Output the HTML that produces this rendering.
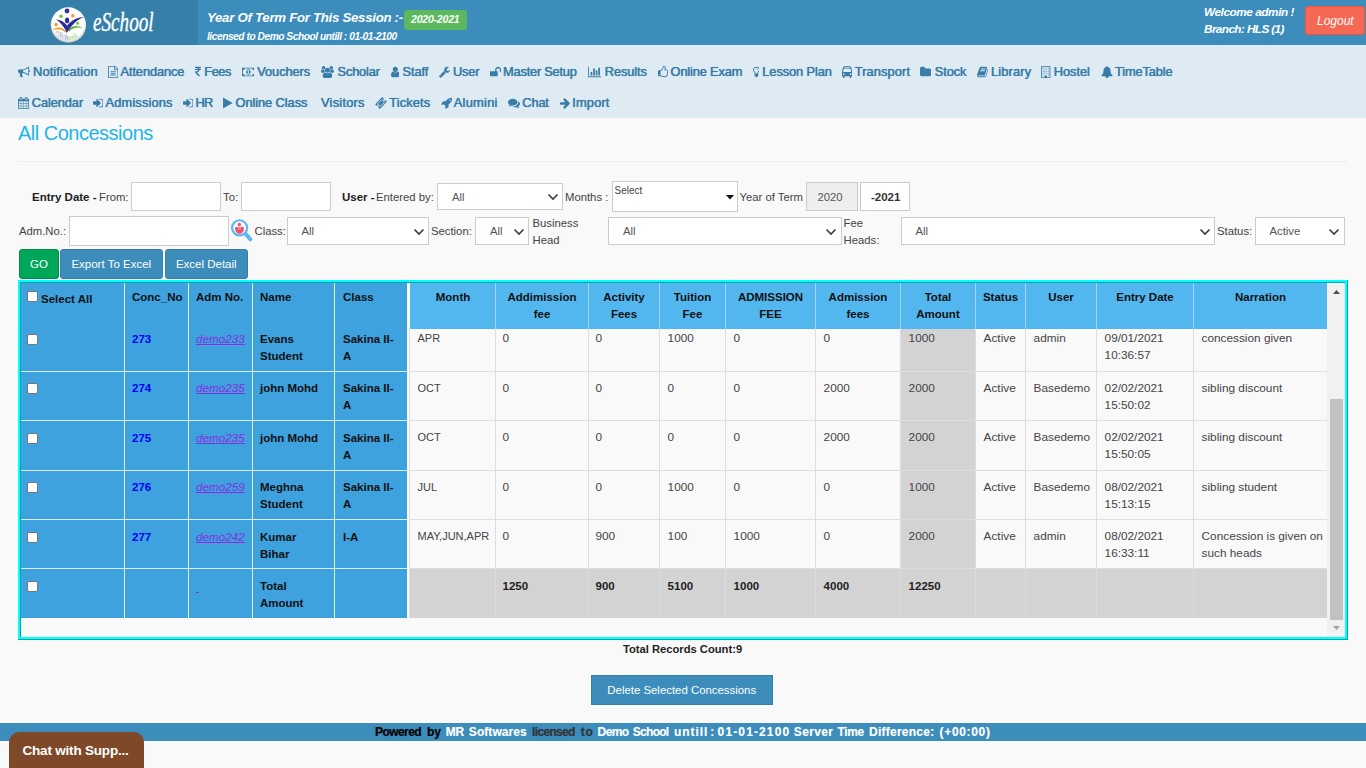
<!DOCTYPE html>
<html lang="en"><head><meta charset="utf-8"><title>All Concessions</title>
<style>
html,body{margin:0;padding:0}
body{width:1366px;height:768px;overflow:hidden;background:#f9f9f9;font-family:"Liberation Sans",sans-serif;font-size:12px;color:#444;position:relative}
.abs{position:absolute}
.t{position:absolute;white-space:nowrap;line-height:17px}
.b{font-weight:bold}
.i{font-style:italic}
.w{color:#fff}
.mi{position:absolute;white-space:nowrap;font-size:12.9px;line-height:15px;color:#3a7ca8;text-shadow:0 0 .7px #3a7ca8;-webkit-text-stroke:.2px #3a7ca8}
.inp{position:absolute;box-sizing:border-box;background:#fff;border:1px solid #ccc}
.lbl{position:absolute;white-space:nowrap;font-size:11.3px;line-height:17px;color:#444}
.btn{position:absolute;box-sizing:border-box;border-radius:3px;color:#fff;font-size:11.5px;text-align:center;line-height:29px;white-space:nowrap}
.cb{position:absolute;box-sizing:border-box;width:11px;height:11px;background:#fff;border:1px solid #767676;border-radius:2px}
.lc{position:absolute;white-space:nowrap;font-weight:bold;font-size:11.5px;line-height:17px;color:#111}
.rc{position:absolute;white-space:nowrap;font-size:11.8px;line-height:17px;color:#444}
.rh{position:absolute;font-weight:bold;font-size:11.5px;line-height:17px;color:#111;text-align:center;white-space:nowrap}
.vl{position:absolute;width:1px}
.hl{position:absolute;height:1px}
</style></head><body>

<div class="abs" style="left:0;top:0;width:198px;height:45px;background:#367fa9"></div>
<div class="abs" style="left:198px;top:0;width:1168px;height:45px;background:#3c8dbc"></div>
<svg class="abs" style="left:50px;top:6px" width="38" height="39" viewBox="0 0 38 39">
<defs><radialGradient id="lg" cx="50%" cy="45%" r="52%"><stop offset="0" stop-color="#ffffff"/><stop offset="0.86" stop-color="#fdfdfc"/><stop offset="1" stop-color="#d4d6d2"/></radialGradient>
</defs>
<ellipse cx="18.5" cy="20.3" rx="16.6" ry="17" fill="#2c5f80" opacity=".55"/>
<circle cx="18.4" cy="19" r="17.7" fill="url(#lg)"/>
<path d="M2.6 23.9 C7 20.6 12.5 20.4 16 25.6 L15.2 26.6 C12 22.8 7.5 22.6 2.6 23.9Z" fill="#f39a2b"/>
<path d="M18.2 24.4 C21.5 19.4 27.5 18.8 32.6 22.4 C27.6 20.8 22.8 21.4 19.2 25.8Z" fill="#5cb531"/>
<path d="M6.2 13.5 C11 14 15 16.6 17.1 19.7 C21 14.6 27 11.4 34 11.1 C27.6 13.2 22.2 18.4 16.9 27 C14.6 21.6 11 16.8 6.2 13.5Z" fill="#2a2d96"/>
<ellipse cx="17.1" cy="14.4" rx="2.1" ry="2.9" fill="#2a2d96"/>
<circle cx="17" cy="5" r="2.4" fill="#35349a"/>
<circle cx="11" cy="10.2" r="1.8" fill="#79c143"/>
<circle cx="22.8" cy="9.8" r="1.8" fill="#f39a2b"/>
<circle cx="6.1" cy="18.6" r="1.8" fill="#f39a2b"/>
<circle cx="27.6" cy="17.3" r="1.5" fill="#79c143"/>
<g font-family="Liberation Serif, serif" font-size="7.4" font-weight="bold" opacity=".62"><text x="5.16" y="26.04" fill="#f0a040" transform="rotate(55.7 5.16 26.04)">e</text><text x="7.23" y="29.01" fill="#7480cc" transform="rotate(40.3 7.23 29.01)">S</text><text x="10.66" y="31.85" fill="#7480cc" transform="rotate(24.8 10.66 31.85)">c</text><text x="13.97" y="33.33" fill="#7480cc" transform="rotate(9.3 13.97 33.33)">h</text><text x="18.37" y="34.00" fill="#8cc860" transform="rotate(-6.9 18.37 34.00)">o</text><text x="22.37" y="33.46" fill="#8cc860" transform="rotate(-22.4 22.37 33.46)">o</text><text x="26.08" y="31.88" fill="#8cc860" transform="rotate(-34.7 26.08 31.88)">l</text></g>
</svg>
<div class="t i w" style="left:92.5px;top:7px;font-family:'Liberation Serif',serif;font-size:27px;line-height:30px;transform:scaleX(.71);transform-origin:0 0;-webkit-text-stroke:.35px #fff">eSchool</div>
<div class="t b i w" style="left:207px;top:9px;font-size:13.2px;line-height:17px;letter-spacing:-0.26px">Year Of Term For This Session :-</div>
<div class="abs" style="left:404px;top:10px;width:63px;height:20px;background:#5cb85c;border-radius:3px"></div>
<div class="t b i w" style="left:411px;top:12px;font-size:10.5px;line-height:15px;letter-spacing:-0.2px">2020-2021</div>
<div class="t b i w" style="left:207px;top:28.5px;font-size:10.2px;line-height:15px;letter-spacing:-0.46px">licensed to Demo School untill : 01-01-2100</div>
<div class="t b i w" style="left:1204px;top:3.5px;font-size:11.8px;line-height:17px;letter-spacing:-0.45px">Welcome admin !</div>
<div class="t b i w" style="left:1204px;top:20.5px;font-size:11.8px;line-height:17px;letter-spacing:-0.62px">Branch: HLS (1)</div>
<div class="abs" style="left:1305px;top:6px;width:60px;height:29px;background:#f56954;border-radius:3px;box-sizing:border-box;border:1px solid #f4543c"></div>
<div class="t i w" style="left:1317px;top:12px;font-size:12px;line-height:18px">Logout</div>
<div class="abs" style="left:0;top:45px;width:1366px;height:73px;background:#dfebf3"></div>
<svg class="abs" style="left:18px;top:66.0px" width="12.00" height="12" viewBox="0 0 1792 1792"><path fill="#3a7ca8" transform="translate(0,1536) scale(1,-1)" d="M1664 896q53 0 90.5 -37.5t37.5 -90.5t-37.5 -90.5t-90.5 -37.5v-384q0 -52 -38 -90t-90 -38q-417 347 -812 380q-58 -19 -91 -66t-31 -100.5t40 -92.5q-20 -33 -23 -65.5t6 -58t33.5 -55t48 -50t61.5 -50.5q-29 -58 -111.5 -83t-168.5 -11.5t-132 55.5q-7 23 -29.5 87.5 t-32 94.5t-23 89t-15 101t3.5 98.5t22 110.5h-122q-66 0 -113 47t-47 113v192q0 66 47 113t113 47h480q435 0 896 384q52 0 90 -38t38 -90v-384zM1536 292v954q-394 -302 -768 -343v-270q377 -42 768 -341z"/></svg>
<div class="mi" style="left:33.05px;top:63.9px;letter-spacing:0.08px">Notification</div>
<svg class="abs" style="left:107.5px;top:66.0px" width="10.29" height="12" viewBox="0 0 1536 1792"><path fill="#3a7ca8" transform="translate(0,1536) scale(1,-1)" d="M1468 1156q28 -28 48 -76t20 -88v-1152q0 -40 -28 -68t-68 -28h-1344q-40 0 -68 28t-28 68v1600q0 40 28 68t68 28h896q40 0 88 -20t76 -48zM1024 1400v-376h376q-10 29 -22 41l-313 313q-12 12 -41 22zM1408 -128v1024h-416q-40 0 -68 28t-28 68v416h-768v-1536h1280z M384 736q0 14 9 23t23 9h704q14 0 23 -9t9 -23v-64q0 -14 -9 -23t-23 -9h-704q-14 0 -23 9t-9 23v64zM1120 512q14 0 23 -9t9 -23v-64q0 -14 -9 -23t-23 -9h-704q-14 0 -23 9t-9 23v64q0 14 9 23t23 9h704zM1120 256q14 0 23 -9t9 -23v-64q0 -14 -9 -23t-23 -9h-704 q-14 0 -23 9t-9 23v64q0 14 9 23t23 9h704z"/></svg>
<div class="mi" style="left:120.55px;top:63.9px;letter-spacing:-0.15px">Attendance</div>
<svg class="abs" style="left:195px;top:66.0px" width="6.01" height="12" viewBox="0 0 898 1792"><path fill="#3a7ca8" transform="translate(0,1536) scale(1,-1)" d="M898 1066v-102q0 -14 -9 -23t-23 -9h-168q-23 -144 -129 -234t-276 -110q167 -178 459 -536q14 -16 4 -34q-8 -18 -29 -18h-195q-16 0 -25 12q-306 367 -498 571q-9 9 -9 22v127q0 13 9.5 22.5t22.5 9.5h112q132 0 212.5 43t102.5 125h-427q-14 0 -23 9t-9 23v102 q0 14 9 23t23 9h413q-57 113 -268 113h-145q-13 0 -22.5 9.5t-9.5 22.5v133q0 14 9 23t23 9h832q14 0 23 -9t9 -23v-102q0 -14 -9 -23t-23 -9h-233q47 -61 64 -144h171q14 0 23 -9t9 -23z"/></svg>
<div class="mi" style="left:204.3px;top:63.9px;letter-spacing:-0.51px">Fees</div>
<svg class="abs" style="left:241.5px;top:66.0px" width="12.86" height="12" viewBox="0 0 1920 1792"><path fill="#3a7ca8" transform="translate(0,1536) scale(1,-1)" d="M768 384h384v96h-128v448h-114l-148 -137l77 -80q42 37 55 57h2v-288h-128v-96zM1280 640q0 -70 -21 -142t-59.5 -134t-101.5 -101t-138 -39t-138 39t-101.5 101t-59.5 134t-21 142t21 142t59.5 134t101.5 101t138 39t138 -39t101.5 -101t59.5 -134t21 -142zM1792 384 v512q-106 0 -181 75t-75 181h-1152q0 -106 -75 -181t-181 -75v-512q106 0 181 -75t75 -181h1152q0 106 75 181t181 75zM1920 1216v-1152q0 -26 -19 -45t-45 -19h-1792q-26 0 -45 19t-19 45v1152q0 26 19 45t45 19h1792q26 0 45 -19t19 -45z"/></svg>
<div class="mi" style="left:257.3px;top:63.9px;letter-spacing:-0.12px">Vouchers</div>
<svg class="abs" style="left:320.75px;top:66.0px" width="12.86" height="12" viewBox="0 0 1920 1792"><path fill="#3a7ca8" transform="translate(0,1536) scale(1,-1)" d="M593 640q-162 -5 -265 -128h-134q-82 0 -138 40.5t-56 118.5q0 353 124 353q6 0 43.5 -21t97.5 -42.5t119 -21.5q67 0 133 23q-5 -37 -5 -66q0 -139 81 -256zM1664 3q0 -120 -73 -189.5t-194 -69.5h-874q-121 0 -194 69.5t-73 189.5q0 53 3.5 103.5t14 109t26.5 108.5 t43 97.5t62 81t85.5 53.5t111.5 20q10 0 43 -21.5t73 -48t107 -48t135 -21.5t135 21.5t107 48t73 48t43 21.5q61 0 111.5 -20t85.5 -53.5t62 -81t43 -97.5t26.5 -108.5t14 -109t3.5 -103.5zM640 1280q0 -106 -75 -181t-181 -75t-181 75t-75 181t75 181t181 75t181 -75 t75 -181zM1344 896q0 -159 -112.5 -271.5t-271.5 -112.5t-271.5 112.5t-112.5 271.5t112.5 271.5t271.5 112.5t271.5 -112.5t112.5 -271.5zM1920 671q0 -78 -56 -118.5t-138 -40.5h-134q-103 123 -265 128q81 117 81 256q0 29 -5 66q66 -23 133 -23q59 0 119 21.5t97.5 42.5 t43.5 21q124 0 124 -353zM1792 1280q0 -106 -75 -181t-181 -75t-181 75t-75 181t75 181t181 75t181 -75t75 -181z"/></svg>
<div class="mi" style="left:337.55px;top:63.9px;letter-spacing:-0.22px">Scholar</div>
<svg class="abs" style="left:390.5px;top:66.0px" width="8.57" height="12" viewBox="0 0 1280 1792"><path fill="#3a7ca8" transform="translate(0,1536) scale(1,-1)" d="M1280 137q0 -109 -62.5 -187t-150.5 -78h-854q-88 0 -150.5 78t-62.5 187q0 85 8.5 160.5t31.5 152t58.5 131t94 89t134.5 34.5q131 -128 313 -128t313 128q76 0 134.5 -34.5t94 -89t58.5 -131t31.5 -152t8.5 -160.5zM1024 1024q0 -159 -112.5 -271.5t-271.5 -112.5 t-271.5 112.5t-112.5 271.5t112.5 271.5t271.5 112.5t271.5 -112.5t112.5 -271.5z"/></svg>
<div class="mi" style="left:402.55px;top:63.9px;letter-spacing:-0.10px">Staff</div>
<svg class="abs" style="left:438.75px;top:66.0px" width="11.14" height="12" viewBox="0 0 1664 1792"><path fill="#3a7ca8" transform="translate(0,1536) scale(1,-1)" d="M384 64q0 26 -19 45t-45 19t-45 -19t-19 -45t19 -45t45 -19t45 19t19 45zM1028 484l-682 -682q-37 -37 -90 -37q-52 0 -91 37l-106 108q-38 36 -38 90q0 53 38 91l681 681q39 -98 114.5 -173.5t173.5 -114.5zM1662 919q0 -39 -23 -106q-47 -134 -164.5 -217.5 t-258.5 -83.5q-185 0 -316.5 131.5t-131.5 316.5t131.5 316.5t316.5 131.5q58 0 121.5 -16.5t107.5 -46.5q16 -11 16 -28t-16 -28l-293 -169v-224l193 -107q5 3 79 48.5t135.5 81t70.5 35.5q15 0 23.5 -10t8.5 -25z"/></svg>
<div class="mi" style="left:453.05px;top:63.9px;letter-spacing:-0.27px">User</div>
<svg class="abs" style="left:489.5px;top:66.0px" width="11.14" height="12" viewBox="0 0 1664 1792"><path fill="#3a7ca8" transform="translate(0,1536) scale(1,-1)" d="M1664 960v-256q0 -26 -19 -45t-45 -19h-64q-26 0 -45 19t-19 45v256q0 106 -75 181t-181 75t-181 -75t-75 -181v-192h96q40 0 68 -28t28 -68v-576q0 -40 -28 -68t-68 -28h-960q-40 0 -68 28t-28 68v576q0 40 28 68t68 28h672v192q0 185 131.5 316.5t316.5 131.5 t316.5 -131.5t131.5 -316.5z"/></svg>
<div class="mi" style="left:503.05px;top:63.9px;letter-spacing:-0.25px">Master Setup</div>
<svg class="abs" style="left:587.5px;top:66.0px" width="13.71" height="12" viewBox="0 0 2048 1792"><path fill="#3a7ca8" transform="translate(0,1536) scale(1,-1)" d="M640 640v-512h-256v512h256zM1024 1152v-1024h-256v1024h256zM2048 0v-128h-2048v1536h128v-1408h1920zM1408 896v-768h-256v768h256zM1792 1280v-1152h-256v1152h256z"/></svg>
<div class="mi" style="left:604.8px;top:63.9px;letter-spacing:-0.14px">Results</div>
<svg class="abs" style="left:657.5px;top:66.0px" width="10.29" height="12" viewBox="0 0 1536 1792"><path fill="#3a7ca8" transform="translate(0,1536) scale(1,-1)" d="M256 192q0 26 -19 45t-45 19t-45 -19t-19 -45t19 -45t45 -19t45 19t19 45zM1408 768q0 51 -39 89.5t-89 38.5h-352q0 58 48 159.5t48 160.5q0 98 -32 145t-128 47q-26 -26 -38 -85t-30.5 -125.5t-59.5 -109.5q-22 -23 -77 -91q-4 -5 -23 -30t-31.5 -41t-34.5 -42.5 t-40 -44t-38.5 -35.5t-40 -27t-35.5 -9h-32v-640h32q13 0 31.5 -3t33 -6.5t38 -11t35 -11.5t35.5 -12.5t29 -10.5q211 -73 342 -73h121q192 0 192 167q0 26 -5 56q30 16 47.5 52.5t17.5 73.5t-18 69q53 50 53 119q0 25 -10 55.5t-25 47.5q32 1 53.5 47t21.5 81zM1536 769 q0 -89 -49 -163q9 -33 9 -69q0 -77 -38 -144q3 -21 3 -43q0 -101 -60 -178q1 -139 -85 -219.5t-227 -80.5h-36h-93q-96 0 -189.5 22.5t-216.5 65.5q-116 40 -138 40h-288q-53 0 -90.5 37.5t-37.5 90.5v640q0 53 37.5 90.5t90.5 37.5h274q36 24 137 155q58 75 107 128 q24 25 35.5 85.5t30.5 126.5t62 108q39 37 90 37q84 0 151 -32.5t102 -101.5t35 -186q0 -93 -48 -192h176q104 0 180 -76t76 -179z"/></svg>
<div class="mi" style="left:670.55px;top:63.9px;letter-spacing:-0.19px">Online Exam</div>
<svg class="abs" style="left:752.5px;top:66.0px" width="6.86" height="12" viewBox="0 0 1024 1792"><path fill="#3a7ca8" transform="translate(0,1536) scale(1,-1)" d="M736 960q0 -13 -9.5 -22.5t-22.5 -9.5t-22.5 9.5t-9.5 22.5q0 46 -54 71t-106 25q-13 0 -22.5 9.5t-9.5 22.5t9.5 22.5t22.5 9.5q50 0 99.5 -16t87 -54t37.5 -90zM896 960q0 72 -34.5 134t-90 101.5t-123 62t-136.5 22.5t-136.5 -22.5t-123 -62t-90 -101.5t-34.5 -134 q0 -101 68 -180q10 -11 30.5 -33t30.5 -33q128 -153 141 -298h228q13 145 141 298q10 11 30.5 33t30.5 33q68 79 68 180zM1024 960q0 -155 -103 -268q-45 -49 -74.5 -87t-59.5 -95.5t-34 -107.5q47 -28 47 -82q0 -37 -25 -64q25 -27 25 -64q0 -52 -45 -81q13 -23 13 -47 q0 -46 -31.5 -71t-77.5 -25q-20 -44 -60 -70t-87 -26t-87 26t-60 70q-46 0 -77.5 25t-31.5 71q0 24 13 47q-45 29 -45 81q0 37 25 64q-25 27 -25 64q0 54 47 82q-4 50 -34 107.5t-59.5 95.5t-74.5 87q-103 113 -103 268q0 99 44.5 184.5t117 142t164 89t186.5 32.5 t186.5 -32.5t164 -89t117 -142t44.5 -184.5z"/></svg>
<div class="mi" style="left:762.3px;top:63.9px;letter-spacing:-0.13px">Lesson Plan</div>
<svg class="abs" style="left:841.75px;top:66.0px" width="10.29" height="12" viewBox="0 0 1536 1792"><path fill="#3a7ca8" transform="translate(0,1536) scale(1,-1)" d="M384 320q0 53 -37.5 90.5t-90.5 37.5t-90.5 -37.5t-37.5 -90.5t37.5 -90.5t90.5 -37.5t90.5 37.5t37.5 90.5zM1408 320q0 53 -37.5 90.5t-90.5 37.5t-90.5 -37.5t-37.5 -90.5t37.5 -90.5t90.5 -37.5t90.5 37.5t37.5 90.5zM1362 716l-72 384q-5 23 -22.5 37.5t-40.5 14.5 h-918q-23 0 -40.5 -14.5t-22.5 -37.5l-72 -384q-5 -30 14 -53t49 -23h1062q30 0 49 23t14 53zM1136 1328q0 20 -14 34t-34 14h-640q-20 0 -34 -14t-14 -34t14 -34t34 -14h640q20 0 34 14t14 34zM1536 603v-603h-128v-128q0 -53 -37.5 -90.5t-90.5 -37.5t-90.5 37.5 t-37.5 90.5v128h-768v-128q0 -53 -37.5 -90.5t-90.5 -37.5t-90.5 37.5t-37.5 90.5v128h-128v603q0 112 25 223l103 454q9 78 97.5 137t230 89t312.5 30t312.5 -30t230 -89t97.5 -137l105 -454q23 -102 23 -223z"/></svg>
<div class="mi" style="left:854.8px;top:63.9px;letter-spacing:0.06px">Transport</div>
<svg class="abs" style="left:919.5px;top:66.0px" width="11.14" height="12" viewBox="0 0 1664 1792"><path fill="#3a7ca8" transform="translate(0,1536) scale(1,-1)" d="M1664 928v-704q0 -92 -66 -158t-158 -66h-1216q-92 0 -158 66t-66 158v960q0 92 66 158t158 66h320q92 0 158 -66t66 -158v-32h672q92 0 158 -66t66 -158z"/></svg>
<div class="mi" style="left:934.8px;top:63.9px;letter-spacing:-0.15px">Stock</div>
<svg class="abs" style="left:977px;top:66.0px" width="11.14" height="12" viewBox="0 0 1664 1792"><path fill="#3a7ca8" transform="translate(0,1536) scale(1,-1)" d="M1639 1058q40 -57 18 -129l-275 -906q-19 -64 -76.5 -107.5t-122.5 -43.5h-923q-77 0 -148.5 53.5t-99.5 131.5q-24 67 -2 127q0 4 3 27t4 37q1 8 -3 21.5t-3 19.5q2 11 8 21t16.5 23.5t16.5 23.5q23 38 45 91.5t30 91.5q3 10 0.5 30t-0.5 28q3 11 17 28t17 23 q21 36 42 92t25 90q1 9 -2.5 32t0.5 28q4 13 22 30.5t22 22.5q19 26 42.5 84.5t27.5 96.5q1 8 -3 25.5t-2 26.5q2 8 9 18t18 23t17 21q8 12 16.5 30.5t15 35t16 36t19.5 32t26.5 23.5t36 11.5t47.5 -5.5l-1 -3q38 9 51 9h761q74 0 114 -56t18 -130l-274 -906 q-36 -119 -71.5 -153.5t-128.5 -34.5h-869q-27 0 -38 -15q-11 -16 -1 -43q24 -70 144 -70h923q29 0 56 15.5t35 41.5l300 987q7 22 5 57q38 -15 59 -43zM575 1056q-4 -13 2 -22.5t20 -9.5h608q13 0 25.5 9.5t16.5 22.5l21 64q4 13 -2 22.5t-20 9.5h-608q-13 0 -25.5 -9.5 t-16.5 -22.5zM492 800q-4 -13 2 -22.5t20 -9.5h608q13 0 25.5 9.5t16.5 22.5l21 64q4 13 -2 22.5t-20 9.5h-608q-13 0 -25.5 -9.5t-16.5 -22.5z"/></svg>
<div class="mi" style="left:991.05px;top:63.9px;letter-spacing:0.12px">Library</div>
<svg class="abs" style="left:1041.25px;top:66.0px" width="9.43" height="12" viewBox="0 0 1408 1792"><path fill="#3a7ca8" transform="translate(0,1536) scale(1,-1)" d="M384 224v-64q0 -13 -9.5 -22.5t-22.5 -9.5h-64q-13 0 -22.5 9.5t-9.5 22.5v64q0 13 9.5 22.5t22.5 9.5h64q13 0 22.5 -9.5t9.5 -22.5zM384 480v-64q0 -13 -9.5 -22.5t-22.5 -9.5h-64q-13 0 -22.5 9.5t-9.5 22.5v64q0 13 9.5 22.5t22.5 9.5h64q13 0 22.5 -9.5t9.5 -22.5z M640 480v-64q0 -13 -9.5 -22.5t-22.5 -9.5h-64q-13 0 -22.5 9.5t-9.5 22.5v64q0 13 9.5 22.5t22.5 9.5h64q13 0 22.5 -9.5t9.5 -22.5zM384 736v-64q0 -13 -9.5 -22.5t-22.5 -9.5h-64q-13 0 -22.5 9.5t-9.5 22.5v64q0 13 9.5 22.5t22.5 9.5h64q13 0 22.5 -9.5t9.5 -22.5z M1152 224v-64q0 -13 -9.5 -22.5t-22.5 -9.5h-64q-13 0 -22.5 9.5t-9.5 22.5v64q0 13 9.5 22.5t22.5 9.5h64q13 0 22.5 -9.5t9.5 -22.5zM896 480v-64q0 -13 -9.5 -22.5t-22.5 -9.5h-64q-13 0 -22.5 9.5t-9.5 22.5v64q0 13 9.5 22.5t22.5 9.5h64q13 0 22.5 -9.5t9.5 -22.5z M640 736v-64q0 -13 -9.5 -22.5t-22.5 -9.5h-64q-13 0 -22.5 9.5t-9.5 22.5v64q0 13 9.5 22.5t22.5 9.5h64q13 0 22.5 -9.5t9.5 -22.5zM384 992v-64q0 -13 -9.5 -22.5t-22.5 -9.5h-64q-13 0 -22.5 9.5t-9.5 22.5v64q0 13 9.5 22.5t22.5 9.5h64q13 0 22.5 -9.5t9.5 -22.5z M1152 480v-64q0 -13 -9.5 -22.5t-22.5 -9.5h-64q-13 0 -22.5 9.5t-9.5 22.5v64q0 13 9.5 22.5t22.5 9.5h64q13 0 22.5 -9.5t9.5 -22.5zM896 736v-64q0 -13 -9.5 -22.5t-22.5 -9.5h-64q-13 0 -22.5 9.5t-9.5 22.5v64q0 13 9.5 22.5t22.5 9.5h64q13 0 22.5 -9.5t9.5 -22.5z M640 992v-64q0 -13 -9.5 -22.5t-22.5 -9.5h-64q-13 0 -22.5 9.5t-9.5 22.5v64q0 13 9.5 22.5t22.5 9.5h64q13 0 22.5 -9.5t9.5 -22.5zM384 1248v-64q0 -13 -9.5 -22.5t-22.5 -9.5h-64q-13 0 -22.5 9.5t-9.5 22.5v64q0 13 9.5 22.5t22.5 9.5h64q13 0 22.5 -9.5t9.5 -22.5z M1152 736v-64q0 -13 -9.5 -22.5t-22.5 -9.5h-64q-13 0 -22.5 9.5t-9.5 22.5v64q0 13 9.5 22.5t22.5 9.5h64q13 0 22.5 -9.5t9.5 -22.5zM896 992v-64q0 -13 -9.5 -22.5t-22.5 -9.5h-64q-13 0 -22.5 9.5t-9.5 22.5v64q0 13 9.5 22.5t22.5 9.5h64q13 0 22.5 -9.5t9.5 -22.5z M640 1248v-64q0 -13 -9.5 -22.5t-22.5 -9.5h-64q-13 0 -22.5 9.5t-9.5 22.5v64q0 13 9.5 22.5t22.5 9.5h64q13 0 22.5 -9.5t9.5 -22.5zM1152 992v-64q0 -13 -9.5 -22.5t-22.5 -9.5h-64q-13 0 -22.5 9.5t-9.5 22.5v64q0 13 9.5 22.5t22.5 9.5h64q13 0 22.5 -9.5t9.5 -22.5z M896 1248v-64q0 -13 -9.5 -22.5t-22.5 -9.5h-64q-13 0 -22.5 9.5t-9.5 22.5v64q0 13 9.5 22.5t22.5 9.5h64q13 0 22.5 -9.5t9.5 -22.5zM1152 1248v-64q0 -13 -9.5 -22.5t-22.5 -9.5h-64q-13 0 -22.5 9.5t-9.5 22.5v64q0 13 9.5 22.5t22.5 9.5h64q13 0 22.5 -9.5t9.5 -22.5z M896 -128h384v1536h-1152v-1536h384v224q0 13 9.5 22.5t22.5 9.5h320q13 0 22.5 -9.5t9.5 -22.5v-224zM1408 1472v-1664q0 -26 -19 -45t-45 -19h-1280q-26 0 -45 19t-19 45v1664q0 26 19 45t45 19h1280q26 0 45 -19t19 -45z"/></svg>
<div class="mi" style="left:1053.8px;top:63.9px;letter-spacing:-0.08px">Hostel</div>
<svg class="abs" style="left:1100.75px;top:66.0px" width="12.00" height="12" viewBox="0 0 1792 1792"><path fill="#3a7ca8" transform="translate(0,1536) scale(1,-1)" d="M912 -160q0 16 -16 16q-59 0 -101.5 42.5t-42.5 101.5q0 16 -16 16t-16 -16q0 -73 51.5 -124.5t124.5 -51.5q16 0 16 16zM1728 128q0 -52 -38 -90t-90 -38h-448q0 -106 -75 -181t-181 -75t-181 75t-75 181h-448q-52 0 -90 38t-38 90q50 42 91 88t85 119.5t74.5 158.5 t50 206t19.5 260q0 152 117 282.5t307 158.5q-8 19 -8 39q0 40 28 68t68 28t68 -28t28 -68q0 -20 -8 -39q190 -28 307 -158.5t117 -282.5q0 -139 19.5 -260t50 -206t74.5 -158.5t85 -119.5t91 -88z"/></svg>
<div class="mi" style="left:1115.05px;top:63.9px;letter-spacing:-0.17px">TimeTable</div>
<svg class="abs" style="left:18px;top:97.0px" width="11.14" height="12" viewBox="0 0 1664 1792"><path fill="#3a7ca8" transform="translate(0,1536) scale(1,-1)" d="M128 -128h288v288h-288v-288zM480 -128h320v288h-320v-288zM128 224h288v320h-288v-320zM480 224h320v320h-320v-320zM128 608h288v288h-288v-288zM864 -128h320v288h-320v-288zM480 608h320v288h-320v-288zM1248 -128h288v288h-288v-288zM864 224h320v320h-320v-320z M512 1088v288q0 13 -9.5 22.5t-22.5 9.5h-64q-13 0 -22.5 -9.5t-9.5 -22.5v-288q0 -13 9.5 -22.5t22.5 -9.5h64q13 0 22.5 9.5t9.5 22.5zM1248 224h288v320h-288v-320zM864 608h320v288h-320v-288zM1248 608h288v288h-288v-288zM1280 1088v288q0 13 -9.5 22.5t-22.5 9.5h-64 q-13 0 -22.5 -9.5t-9.5 -22.5v-288q0 -13 9.5 -22.5t22.5 -9.5h64q13 0 22.5 9.5t9.5 22.5zM1664 1152v-1280q0 -52 -38 -90t-90 -38h-1408q-52 0 -90 38t-38 90v1280q0 52 38 90t90 38h128v96q0 66 47 113t113 47h64q66 0 113 -47t47 -113v-96h384v96q0 66 47 113t113 47 h64q66 0 113 -47t47 -113v-96h128q52 0 90 -38t38 -90z"/></svg>
<div class="mi" style="left:31.8px;top:94.9px;letter-spacing:-0.13px">Calendar</div>
<svg class="abs" style="left:93px;top:97.0px" width="10.29" height="12" viewBox="0 0 1536 1792"><path fill="#3a7ca8" transform="translate(0,1536) scale(1,-1)" d="M1184 640q0 -26 -19 -45l-544 -544q-19 -19 -45 -19t-45 19t-19 45v288h-448q-26 0 -45 19t-19 45v384q0 26 19 45t45 19h448v288q0 26 19 45t45 19t45 -19l544 -544q19 -19 19 -45zM1536 992v-704q0 -119 -84.5 -203.5t-203.5 -84.5h-320q-13 0 -22.5 9.5t-9.5 22.5 q0 4 -1 20t-0.5 26.5t3 23.5t10 19.5t20.5 6.5h320q66 0 113 47t47 113v704q0 66 -47 113t-113 47h-288h-11h-13t-11.5 1t-11.5 3t-8 5.5t-7 9t-2 13.5q0 4 -1 20t-0.5 26.5t3 23.5t10 19.5t20.5 6.5h320q119 0 203.5 -84.5t84.5 -203.5z"/></svg>
<div class="mi" style="left:105.55px;top:94.9px;letter-spacing:0.11px">Admissions</div>
<svg class="abs" style="left:182.5px;top:97.0px" width="10.29" height="12" viewBox="0 0 1536 1792"><path fill="#3a7ca8" transform="translate(0,1536) scale(1,-1)" d="M1184 640q0 -26 -19 -45l-544 -544q-19 -19 -45 -19t-45 19t-19 45v288h-448q-26 0 -45 19t-19 45v384q0 26 19 45t45 19h448v288q0 26 19 45t45 19t45 -19l544 -544q19 -19 19 -45zM1536 992v-704q0 -119 -84.5 -203.5t-203.5 -84.5h-320q-13 0 -22.5 9.5t-9.5 22.5 q0 4 -1 20t-0.5 26.5t3 23.5t10 19.5t20.5 6.5h320q66 0 113 47t47 113v704q0 66 -47 113t-113 47h-288h-11h-13t-11.5 1t-11.5 3t-8 5.5t-7 9t-2 13.5q0 4 -1 20t-0.5 26.5t3 23.5t10 19.5t20.5 6.5h320q119 0 203.5 -84.5t84.5 -203.5z"/></svg>
<div class="mi" style="left:195.55px;top:94.9px;letter-spacing:-0.98px">HR</div>
<svg class="abs" style="left:223.25px;top:97.0px" width="9.43" height="12" viewBox="0 0 1408 1792"><path fill="#3a7ca8" transform="translate(0,1536) scale(1,-1)" d="M1384 609l-1328 -738q-23 -13 -39.5 -3t-16.5 36v1472q0 26 16.5 36t39.5 -3l1328 -738q23 -13 23 -31t-23 -31z"/></svg>
<div class="mi" style="left:235.55px;top:94.9px;letter-spacing:-0.11px">Online Class</div>
<div class="mi" style="left:321.05px;top:94.9px;letter-spacing:0.20px">Visitors</div>
<svg class="abs" style="left:375px;top:97.0px" width="12.00" height="12" viewBox="0 0 1792 1792"><path fill="#3a7ca8" transform="translate(0,1536) scale(1,-1)" d="M1024 1084l316 -316l-572 -572l-316 316zM813 105l618 618q19 19 19 45t-19 45l-362 362q-18 18 -45 18t-45 -18l-618 -618q-19 -19 -19 -45t19 -45l362 -362q18 -18 45 -18t45 18zM1702 742l-907 -908q-37 -37 -90.5 -37t-90.5 37l-126 126q56 56 56 136t-56 136 t-136 56t-136 -56l-125 126q-37 37 -37 90.5t37 90.5l907 906q37 37 90.5 37t90.5 -37l125 -125q-56 -56 -56 -136t56 -136t136 -56t136 56l126 -125q37 -37 37 -90.5t-37 -90.5z"/></svg>
<div class="mi" style="left:389.3px;top:94.9px;letter-spacing:0.09px">Tickets</div>
<svg class="abs" style="left:440.75px;top:97.0px" width="11.14" height="12" viewBox="0 0 1664 1792"><path fill="#3a7ca8" transform="translate(0,1536) scale(1,-1)" d="M1440 1088q0 40 -28 68t-68 28t-68 -28t-28 -68t28 -68t68 -28t68 28t28 68zM1664 1376q0 -249 -75.5 -430.5t-253.5 -360.5q-81 -80 -195 -176l-20 -379q-2 -16 -16 -26l-384 -224q-7 -4 -16 -4q-12 0 -23 9l-64 64q-13 14 -8 32l85 276l-281 281l-276 -85q-3 -1 -9 -1 q-14 0 -23 9l-64 64q-17 19 -5 39l224 384q10 14 26 16l379 20q96 114 176 195q188 187 358 258t431 71q14 0 24 -9.5t10 -22.5z"/></svg>
<div class="mi" style="left:453.8px;top:94.9px;letter-spacing:0.23px">Alumini</div>
<svg class="abs" style="left:507.5px;top:97.0px" width="12.00" height="12" viewBox="0 0 1792 1792"><path fill="#3a7ca8" transform="translate(0,1536) scale(1,-1)" d="M1408 768q0 -139 -94 -257t-256.5 -186.5t-353.5 -68.5q-86 0 -176 16q-124 -88 -278 -128q-36 -9 -86 -16h-3q-11 0 -20.5 8t-11.5 21q-1 3 -1 6.5t0.5 6.5t2 6l2.5 5t3.5 5.5t4 5t4.5 5t4 4.5q5 6 23 25t26 29.5t22.5 29t25 38.5t20.5 44q-124 72 -195 177t-71 224 q0 139 94 257t256.5 186.5t353.5 68.5t353.5 -68.5t256.5 -186.5t94 -257zM1792 512q0 -120 -71 -224.5t-195 -176.5q10 -24 20.5 -44t25 -38.5t22.5 -29t26 -29.5t23 -25q1 -1 4 -4.5t4.5 -5t4 -5t3.5 -5.5l2.5 -5t2 -6t0.5 -6.5t-1 -6.5q-3 -14 -13 -22t-22 -7 q-50 7 -86 16q-154 40 -278 128q-90 -16 -176 -16q-271 0 -472 132q58 -4 88 -4q161 0 309 45t264 129q125 92 192 212t67 254q0 77 -23 152q129 -71 204 -178t75 -230z"/></svg>
<div class="mi" style="left:522.3px;top:94.9px;letter-spacing:-0.19px">Chat</div>
<svg class="abs" style="left:559.5px;top:97.0px" width="10.29" height="12" viewBox="0 0 1536 1792"><path fill="#3a7ca8" transform="translate(0,1536) scale(1,-1)" d="M1472 576q0 -54 -37 -91l-651 -651q-39 -37 -91 -37q-51 0 -90 37l-75 75q-38 38 -38 91t38 91l293 293h-704q-52 0 -84.5 37.5t-32.5 90.5v128q0 53 32.5 90.5t84.5 37.5h704l-293 294q-38 36 -38 90t38 90l75 75q38 38 90 38q53 0 91 -38l651 -651q37 -35 37 -90z"/></svg>
<div class="mi" style="left:572.3px;top:94.9px;letter-spacing:0.12px">Import</div>
<div class="t" style="left:18px;top:121px;font-size:20px;line-height:24px;color:#1cb5ea;letter-spacing:-0.5px">All Concessions</div>
<div class="hl" style="left:18px;top:161px;width:1330px;background:#eee"></div>
<div class="lbl b" style="left:32px;top:189px;color:#222;font-size:11.5px">Entry Date -</div>
<div class="lbl" style="left:99px;top:189px">From:</div>
<div class="inp" style="left:131px;top:182px;width:90px;height:29px"></div>
<div class="lbl" style="left:223px;top:189px">To:</div>
<div class="inp" style="left:241px;top:182px;width:90px;height:29px"></div>
<div class="lbl b" style="left:342px;top:189px;color:#222;font-size:11.5px">User -</div>
<div class="lbl" style="left:376px;top:189px">Entered by:</div>
<div class="inp" style="left:437px;top:183px;width:126px;height:27px"></div><div class="lbl" style="left:452px;top:188.5px;color:#555">All</div><svg class="abs" style="left:546.5px;top:193.0px" width="12" height="8" viewBox="0 0 12 8"><path d="M1.5 1.5 L6 6 L10.5 1.5" fill="none" stroke="#3a3a3a" stroke-width="1.6"/></svg>
<div class="lbl" style="left:565px;top:189px">Months :</div>
<div class="inp" style="left:612px;top:181px;width:126px;height:31px"></div>
<div class="lbl" style="left:614.5px;top:184px;font-size:10px;line-height:14px">Select</div>
<svg class="abs" style="left:726px;top:195px" width="8" height="5" viewBox="0 0 8 5"><path d="M0 0H8L4 4.5Z" fill="#111"/></svg>
<div class="lbl" style="left:739.5px;top:189px">Year of Term</div>
<div class="inp" style="left:806px;top:182px;width:52px;height:29px;background:#eee"></div>
<div class="lbl" style="left:817.5px;top:189px;color:#555">2020</div>
<div class="inp" style="left:860px;top:182px;width:50px;height:29px"></div>
<div class="lbl b" style="left:871px;top:189px;color:#333;font-size:11.5px">-2021</div>
<div class="lbl" style="left:19px;top:223px">Adm.No.:</div>
<div class="inp" style="left:69px;top:216px;width:160px;height:30px"></div>
<svg class="abs" style="left:230px;top:218px" width="24" height="25" viewBox="0 0 24 25">
<line x1="15.6" y1="15.8" x2="20.3" y2="21.3" stroke="#5bb7f5" stroke-width="4" stroke-linecap="round"/>
<circle cx="9.6" cy="9.8" r="7.55" fill="#fbfbfb" stroke="#5bb7f5" stroke-width="2.2"/>
<circle cx="9.35" cy="6.4" r="1.75" fill="#f4516c"/>
<path d="M5 9.9 Q5 8.9 6.2 8.9 H12.8 Q14 8.9 14 9.9 C14 17.6 5 17.6 5 9.9Z" fill="#f4516c"/>
<path d="M8.7 8.9 V11.8 M10.2 8.9 V11.8" stroke="#fbe4e8" stroke-width=".5" fill="none"/>
</svg>
<div class="lbl" style="left:254.5px;top:223px">Class:</div>
<div class="inp" style="left:287px;top:217px;width:142px;height:28px"></div><div class="lbl" style="left:301.5px;top:222.5px;color:#555">All</div><svg class="abs" style="left:412.75px;top:227.5px" width="12" height="8" viewBox="0 0 12 8"><path d="M1.5 1.5 L6 6 L10.5 1.5" fill="none" stroke="#3a3a3a" stroke-width="1.6"/></svg>
<div class="lbl" style="left:431px;top:223px">Section:</div>
<div class="inp" style="left:475px;top:217px;width:54px;height:28px"></div><div class="lbl" style="left:490px;top:222.5px;color:#555">All</div><svg class="abs" style="left:513px;top:227.5px" width="12" height="8" viewBox="0 0 12 8"><path d="M1.5 1.5 L6 6 L10.5 1.5" fill="none" stroke="#3a3a3a" stroke-width="1.6"/></svg>
<div class="lbl" style="left:532.5px;top:214.5px;white-space:normal;width:60px">Business Head</div>
<div class="inp" style="left:608px;top:217px;width:234px;height:28px"></div><div class="lbl" style="left:623px;top:222.5px;color:#555">All</div><svg class="abs" style="left:825px;top:227.5px" width="12" height="8" viewBox="0 0 12 8"><path d="M1.5 1.5 L6 6 L10.5 1.5" fill="none" stroke="#3a3a3a" stroke-width="1.6"/></svg>
<div class="lbl" style="left:843.5px;top:214.5px;white-space:normal;width:50px">Fee Heads:</div>
<div class="inp" style="left:901px;top:217px;width:314px;height:28px"></div><div class="lbl" style="left:915.5px;top:222.5px;color:#555">All</div><svg class="abs" style="left:1198.5px;top:227.5px" width="12" height="8" viewBox="0 0 12 8"><path d="M1.5 1.5 L6 6 L10.5 1.5" fill="none" stroke="#3a3a3a" stroke-width="1.6"/></svg>
<div class="lbl" style="left:1217px;top:223px">Status:</div>
<div class="inp" style="left:1255px;top:217px;width:90px;height:28px"></div><div class="lbl" style="left:1269.5px;top:222.5px;color:#555">Active</div><svg class="abs" style="left:1328px;top:227.5px" width="12" height="8" viewBox="0 0 12 8"><path d="M1.5 1.5 L6 6 L10.5 1.5" fill="none" stroke="#3a3a3a" stroke-width="1.6"/></svg>
<div class="btn" style="left:19px;top:249px;width:40px;height:30px;background:#00a65a;border:1px solid #008d4c">GO</div>
<div class="btn" style="left:60px;top:249px;width:102.5px;height:30px;background:#3c8dbc;border:1px solid #367fa9">Export To Excel</div>
<div class="btn" style="left:165px;top:249px;width:82.5px;height:30px;background:#3c8dbc;border:1px solid #367fa9">Excel Detail</div>
<div class="abs" style="left:18px;top:280px;width:1330px;height:360px;background:#00a8a8"></div>
<div class="abs" style="left:18px;top:280px;width:1329px;height:359px;background:#00ffff"></div>
<div class="abs" style="left:20px;top:282px;width:1325px;height:355px;background:#00a8a8"></div>
<div class="abs" style="left:21px;top:283px;width:1324px;height:354px;background:#f9f9f9"></div>
<div class="abs" style="left:21px;top:283px;width:386px;height:335px;background:#3ea2de"></div>
<div class="abs" style="left:407px;top:283px;width:3px;height:335px;background:#fdfdfd"></div>
<div class="abs" style="left:410px;top:283px;width:917px;height:46px;background:#52b7ef"></div>
<div class="abs" style="left:901px;top:329px;width:74px;height:289px;background:#d3d3d3"></div>
<div class="abs" style="left:409px;top:569px;width:918px;height:49px;background:#d3d3d3"></div>
<div class="abs" style="left:1327px;top:283px;width:18px;height:354px;background:#f1f1f1"></div>
<div class="abs" style="left:1330px;top:399px;width:13px;height:221px;background:#c1c1c1"></div>
<svg class="abs" style="left:1333px;top:290px" width="7" height="4" viewBox="0 0 7 4"><path d="M0 4H7L3.5 0Z" fill="#505050"/></svg>
<svg class="abs" style="left:1333px;top:626px" width="7" height="4" viewBox="0 0 7 4"><path d="M0 0H7L3.5 4Z" fill="#a3a3a3"/></svg>
<div class="vl" style="left:124px;top:283px;height:335px;background:rgba(255,255,255,.82)"></div>
<div class="vl" style="left:188px;top:283px;height:335px;background:rgba(255,255,255,.82)"></div>
<div class="vl" style="left:252px;top:283px;height:335px;background:rgba(255,255,255,.82)"></div>
<div class="vl" style="left:334px;top:283px;height:335px;background:rgba(255,255,255,.82)"></div>
<div class="hl" style="left:21px;top:371px;width:386px;background:rgba(255,255,255,.82)"></div>
<div class="hl" style="left:410px;top:371px;width:917px;background:#ddd"></div>
<div class="hl" style="left:21px;top:420px;width:386px;background:rgba(255,255,255,.82)"></div>
<div class="hl" style="left:410px;top:420px;width:917px;background:#ddd"></div>
<div class="hl" style="left:21px;top:470px;width:386px;background:rgba(255,255,255,.82)"></div>
<div class="hl" style="left:410px;top:470px;width:917px;background:#ddd"></div>
<div class="hl" style="left:21px;top:519px;width:386px;background:rgba(255,255,255,.82)"></div>
<div class="hl" style="left:410px;top:519px;width:917px;background:#ddd"></div>
<div class="hl" style="left:21px;top:568px;width:386px;background:rgba(255,255,255,.82)"></div>
<div class="hl" style="left:410px;top:568px;width:917px;background:#ddd"></div>
<div class="vl" style="left:495px;top:329px;height:289px;background:#ddd"></div>
<div class="vl" style="left:495px;top:283px;height:46px;background:rgba(255,255,255,.45)"></div>
<div class="vl" style="left:588px;top:329px;height:289px;background:#ddd"></div>
<div class="vl" style="left:588px;top:283px;height:46px;background:rgba(255,255,255,.45)"></div>
<div class="vl" style="left:659px;top:329px;height:289px;background:#ddd"></div>
<div class="vl" style="left:659px;top:283px;height:46px;background:rgba(255,255,255,.45)"></div>
<div class="vl" style="left:725px;top:329px;height:289px;background:#ddd"></div>
<div class="vl" style="left:725px;top:283px;height:46px;background:rgba(255,255,255,.45)"></div>
<div class="vl" style="left:815px;top:329px;height:289px;background:#ddd"></div>
<div class="vl" style="left:815px;top:283px;height:46px;background:rgba(255,255,255,.45)"></div>
<div class="vl" style="left:900px;top:329px;height:289px;background:#ddd"></div>
<div class="vl" style="left:900px;top:283px;height:46px;background:rgba(255,255,255,.45)"></div>
<div class="vl" style="left:975px;top:329px;height:289px;background:#ddd"></div>
<div class="vl" style="left:975px;top:283px;height:46px;background:rgba(255,255,255,.45)"></div>
<div class="vl" style="left:1025px;top:329px;height:289px;background:#ddd"></div>
<div class="vl" style="left:1025px;top:283px;height:46px;background:rgba(255,255,255,.45)"></div>
<div class="vl" style="left:1096px;top:329px;height:289px;background:#ddd"></div>
<div class="vl" style="left:1096px;top:283px;height:46px;background:rgba(255,255,255,.45)"></div>
<div class="vl" style="left:1193px;top:329px;height:289px;background:#ddd"></div>
<div class="vl" style="left:1193px;top:283px;height:46px;background:rgba(255,255,255,.45)"></div>
<div class="vl" style="left:409px;top:329px;height:289px;background:#ddd"></div>
<div class="cb" style="left:27px;top:291px"></div>
<div class="lc" style="left:41px;top:290.5px">Select All</div>
<div class="lc" style="left:132px;top:289px">Conc_No</div>
<div class="lc" style="left:196px;top:289px">Adm No.</div>
<div class="lc" style="left:260px;top:289px">Name</div>
<div class="lc" style="left:343px;top:289px">Class</div>
<div class="rh" style="left:410px;top:289px;width:86px">Month</div>
<div class="rh" style="left:495px;top:289px;width:94px">Addimission<br>fee</div>
<div class="rh" style="left:588px;top:289px;width:72px">Activity<br>Fees</div>
<div class="rh" style="left:659px;top:289px;width:67px">Tuition<br>Fee</div>
<div class="rh" style="left:725px;top:289px;width:91px">ADMISSION<br>FEE</div>
<div class="rh" style="left:815px;top:289px;width:86px">Admission<br>fees</div>
<div class="rh" style="left:900px;top:289px;width:76px">Total<br>Amount</div>
<div class="rh" style="left:975px;top:289px;width:51px">Status</div>
<div class="rh" style="left:1025px;top:289px;width:72px">User</div>
<div class="rh" style="left:1096px;top:289px;width:98px">Entry Date</div>
<div class="rh" style="left:1193px;top:289px;width:135px">Narration</div>
<div class="cb" style="left:27px;top:333.5px"></div>
<div class="lc" style="left:132px;top:330.5px;color:#0000f5">273</div>
<div class="lc i" style="left:196px;top:329.8px;font-weight:normal;font-size:11.7px;color:#8a2be2;text-decoration:underline">demo233</div>
<div class="lc" style="left:260px;top:330.5px">Evans<br>Student</div>
<div class="lc" style="left:343px;top:330.5px">Sakina II-<br>A</div>
<div class="rc" style="left:417.5px;top:330.2px;font-size:11px">APR</div>
<div class="rc" style="left:502.5px;top:330.2px">0</div>
<div class="rc" style="left:595.5px;top:330.2px">0</div>
<div class="rc" style="left:667.6px;top:330.2px">1000</div>
<div class="rc" style="left:733.6px;top:330.2px">0</div>
<div class="rc" style="left:823.6px;top:330.2px">0</div>
<div class="rc" style="left:908.6px;top:330.2px">1000</div>
<div class="rc" style="left:983.6px;top:330.2px">Active</div>
<div class="rc" style="left:1033.6px;top:330.2px">admin</div>
<div class="rc" style="left:1104.6px;top:330.2px">09/01/2021<br>10:36:57</div>
<div class="rc" style="left:1201.6px;top:330.2px">concession given</div>
<div class="cb" style="left:27px;top:383px"></div>
<div class="lc" style="left:132px;top:380px;color:#0000f5">274</div>
<div class="lc i" style="left:196px;top:379.3px;font-weight:normal;font-size:11.7px;color:#8a2be2;text-decoration:underline">demo235</div>
<div class="lc" style="left:260px;top:380px">john Mohd</div>
<div class="lc" style="left:343px;top:380px">Sakina II-<br>A</div>
<div class="rc" style="left:417.5px;top:379.7px;font-size:11px">OCT</div>
<div class="rc" style="left:502.5px;top:379.7px">0</div>
<div class="rc" style="left:595.5px;top:379.7px">0</div>
<div class="rc" style="left:667.6px;top:379.7px">0</div>
<div class="rc" style="left:733.6px;top:379.7px">0</div>
<div class="rc" style="left:823.6px;top:379.7px">2000</div>
<div class="rc" style="left:908.6px;top:379.7px">2000</div>
<div class="rc" style="left:983.6px;top:379.7px">Active</div>
<div class="rc" style="left:1033.6px;top:379.7px">Basedemo</div>
<div class="rc" style="left:1104.6px;top:379.7px">02/02/2021<br>15:50:02</div>
<div class="rc" style="left:1201.6px;top:379.7px">sibling discount</div>
<div class="cb" style="left:27px;top:432.5px"></div>
<div class="lc" style="left:132px;top:429.5px;color:#0000f5">275</div>
<div class="lc i" style="left:196px;top:428.8px;font-weight:normal;font-size:11.7px;color:#8a2be2;text-decoration:underline">demo235</div>
<div class="lc" style="left:260px;top:429.5px">john Mohd</div>
<div class="lc" style="left:343px;top:429.5px">Sakina II-<br>A</div>
<div class="rc" style="left:417.5px;top:429.2px;font-size:11px">OCT</div>
<div class="rc" style="left:502.5px;top:429.2px">0</div>
<div class="rc" style="left:595.5px;top:429.2px">0</div>
<div class="rc" style="left:667.6px;top:429.2px">0</div>
<div class="rc" style="left:733.6px;top:429.2px">0</div>
<div class="rc" style="left:823.6px;top:429.2px">2000</div>
<div class="rc" style="left:908.6px;top:429.2px">2000</div>
<div class="rc" style="left:983.6px;top:429.2px">Active</div>
<div class="rc" style="left:1033.6px;top:429.2px">Basedemo</div>
<div class="rc" style="left:1104.6px;top:429.2px">02/02/2021<br>15:50:05</div>
<div class="rc" style="left:1201.6px;top:429.2px">sibling discount</div>
<div class="cb" style="left:27px;top:482px"></div>
<div class="lc" style="left:132px;top:479px;color:#0000f5">276</div>
<div class="lc i" style="left:196px;top:478.3px;font-weight:normal;font-size:11.7px;color:#8a2be2;text-decoration:underline">demo259</div>
<div class="lc" style="left:260px;top:479px">Meghna<br>Student</div>
<div class="lc" style="left:343px;top:479px">Sakina II-<br>A</div>
<div class="rc" style="left:417.5px;top:478.7px;font-size:11px">JUL</div>
<div class="rc" style="left:502.5px;top:478.7px">0</div>
<div class="rc" style="left:595.5px;top:478.7px">0</div>
<div class="rc" style="left:667.6px;top:478.7px">1000</div>
<div class="rc" style="left:733.6px;top:478.7px">0</div>
<div class="rc" style="left:823.6px;top:478.7px">0</div>
<div class="rc" style="left:908.6px;top:478.7px">1000</div>
<div class="rc" style="left:983.6px;top:478.7px">Active</div>
<div class="rc" style="left:1033.6px;top:478.7px">Basedemo</div>
<div class="rc" style="left:1104.6px;top:478.7px">08/02/2021<br>15:13:15</div>
<div class="rc" style="left:1201.6px;top:478.7px">sibling student</div>
<div class="cb" style="left:27px;top:531.5px"></div>
<div class="lc" style="left:132px;top:528.5px;color:#0000f5">277</div>
<div class="lc i" style="left:196px;top:527.8px;font-weight:normal;font-size:11.7px;color:#8a2be2;text-decoration:underline">demo242</div>
<div class="lc" style="left:260px;top:528.5px">Kumar<br>Bihar</div>
<div class="lc" style="left:343px;top:528.5px">I-A</div>
<div class="rc" style="left:417.5px;top:528.2px;font-size:11px">MAY,JUN,APR</div>
<div class="rc" style="left:502.5px;top:528.2px">0</div>
<div class="rc" style="left:595.5px;top:528.2px">900</div>
<div class="rc" style="left:667.6px;top:528.2px">100</div>
<div class="rc" style="left:733.6px;top:528.2px">1000</div>
<div class="rc" style="left:823.6px;top:528.2px">0</div>
<div class="rc" style="left:908.6px;top:528.2px">2000</div>
<div class="rc" style="left:983.6px;top:528.2px">Active</div>
<div class="rc" style="left:1033.6px;top:528.2px">admin</div>
<div class="rc" style="left:1104.6px;top:528.2px">08/02/2021<br>16:33:11</div>
<div class="rc" style="left:1201.6px;top:528.2px">Concession is given on<br>such heads</div>
<div class="cb" style="left:27px;top:580.5px"></div>
<div class="abs" style="left:196px;top:591.5px;width:3px;height:1px;background:#8a2be2"></div>
<div class="lc" style="left:260px;top:577.5px">Total<br>Amount</div>
<div class="rc b" style="left:502.5px;top:577.5px;color:#222;font-size:11.5px">1250</div>
<div class="rc b" style="left:595.5px;top:577.5px;color:#222;font-size:11.5px">900</div>
<div class="rc b" style="left:667.6px;top:577.5px;color:#222;font-size:11.5px">5100</div>
<div class="rc b" style="left:733.6px;top:577.5px;color:#222;font-size:11.5px">1000</div>
<div class="rc b" style="left:823.6px;top:577.5px;color:#222;font-size:11.5px">4000</div>
<div class="rc b" style="left:908.6px;top:577.5px;color:#222;font-size:11.5px">12250</div>
<div class="t b" style="left:623px;top:640.5px;font-size:11.2px;color:#222">Total Records Count:9</div>
<div class="btn" style="left:591px;top:675px;width:181.5px;height:29.5px;background:#3c8dbc;border:1px solid #367fa9;border-radius:0;font-size:11.4px">Delete Selected Concessions</div>
<div class="abs" style="left:0;top:723px;width:1366px;height:18px;background:#3c8dbc"></div>
<div class="abs" style="left:0;top:723px;width:1366px;height:18px;font-weight:bold;font-size:12px;line-height:18px;white-space:nowrap">
<span class="abs" style="left:375.10px;top:-0.5px;color:#000;letter-spacing:-0.58px;text-shadow:0 0 1px rgba(0,0,0,.4)">Powered</span>
<span class="abs" style="left:427.10px;top:-0.5px;color:#000;letter-spacing:-0.22px;text-shadow:0 0 1px rgba(0,0,0,.4)">by</span>
<span class="abs" style="left:445.85px;top:-0.5px;color:#fff;letter-spacing:-0.37px;text-shadow:0 0 1px rgba(255,255,255,.4)">MR</span>
<span class="abs" style="left:468.85px;top:-0.5px;color:#fff;letter-spacing:0.06px;text-shadow:0 0 1px rgba(255,255,255,.4)">Softwares</span>
<span class="abs" style="left:532.10px;top:-0.5px;color:#333;letter-spacing:-0.68px;text-shadow:0 0 1px rgba(51,51,51,.4)">licensed</span>
<span class="abs" style="left:580.85px;top:-0.5px;color:#333;letter-spacing:0.72px;text-shadow:0 0 1px rgba(51,51,51,.4)">to</span>
<span class="abs" style="left:597.60px;top:-0.5px;color:#fff;letter-spacing:-0.60px;text-shadow:0 0 1px rgba(255,255,255,.4)">Demo</span>
<span class="abs" style="left:632.85px;top:-0.5px;color:#fff;letter-spacing:-0.74px;text-shadow:0 0 1px rgba(255,255,255,.4)">School</span>
<span class="abs" style="left:674.10px;top:-0.5px;color:#fff;letter-spacing:0.93px;text-shadow:0 0 1px rgba(255,255,255,.4)">untill</span>
<span class="abs" style="left:710.35px;top:-0.5px;color:#fff;letter-spacing:0.00px;text-shadow:0 0 1px rgba(255,255,255,.4)">:</span>
<span class="abs" style="left:717.60px;top:-0.5px;color:#fff;letter-spacing:1.13px;text-shadow:0 0 1px rgba(255,255,255,.4)">01-01-2100</span>
<span class="abs" style="left:793.85px;top:-0.5px;color:#fff;letter-spacing:0.33px;text-shadow:0 0 1px rgba(255,255,255,.4)">Server</span>
<span class="abs" style="left:837.60px;top:-0.5px;color:#fff;letter-spacing:-0.42px;text-shadow:0 0 1px rgba(255,255,255,.4)">Time</span>
<span class="abs" style="left:869.10px;top:-0.5px;color:#fff;letter-spacing:0.24px;text-shadow:0 0 1px rgba(255,255,255,.4)">Difference:</span>
<span class="abs" style="left:939.60px;top:-0.5px;color:#fff;letter-spacing:0.66px;text-shadow:0 0 1px rgba(255,255,255,.4)">(+00:00)</span>
</div>
<div class="abs" style="left:9px;top:732px;width:135px;height:40px;background:#7f4829;border-radius:10px 10px 0 0"></div>
<div class="t b w" style="left:22.5px;top:741px;font-size:13.5px;line-height:20px;letter-spacing:-0.2px">Chat with Supp...</div>
</body></html>
